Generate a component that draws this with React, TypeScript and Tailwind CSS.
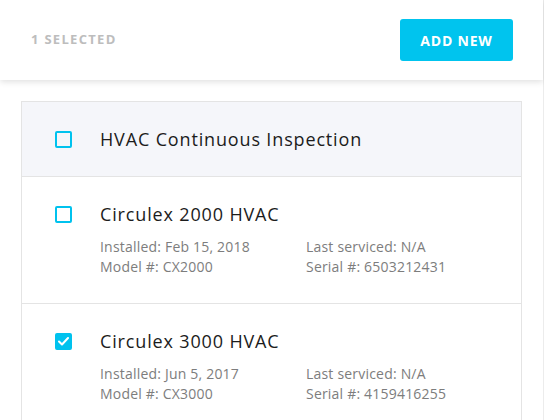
import React, { useState } from 'react';

type Item = {
  id: number;
  name: string;
  installed: string;
  serviced: string;
  model: string;
  serial: string;
};

const items: Item[] = [
  { id: 1, name: 'Circulex 2000 HVAC', installed: 'Feb 15, 2018', serviced: 'N/A', model: 'CX2000', serial: '6503212431' },
  { id: 2, name: 'Circulex 3000 HVAC', installed: 'Jun 5, 2017', serviced: 'N/A', model: 'CX3000', serial: '4159416255' },
];

function Checkbox({ checked, onChange }: { checked: boolean; onChange: () => void }) {
  return (
    <button
      type="button"
      onClick={onChange}
      className={`flex h-[17px] w-[17px] shrink-0 items-center justify-center rounded-[2px] border-2 border-[#00c2ee] ${checked ? 'bg-[#00c2ee]' : 'bg-transparent'}`}
    >
      {checked && (
        <svg width="11" height="9" viewBox="0 0 11 9" fill="none">
          <path d="M1 4.5L4 7.5L10 1" stroke="white" strokeWidth="2" strokeLinecap="round" strokeLinejoin="round" />
        </svg>
      )}
    </button>
  );
}

export default function App() {
  const [selected, setSelected] = useState<number[]>([2]);

  const toggle = (id: number) =>
    setSelected((s) => (s.includes(id) ? s.filter((x) => x !== id) : [...s, id]));

  return (
    <div className="min-h-[420px] w-[544px] border-r border-[#ececec] bg-white" style={{ fontFamily: '"Open Sans", sans-serif' }}>
      <header className="flex h-20 w-[543px] items-center justify-between pl-[31px] pr-[30px] shadow-[0_2px_6px_rgba(0,0,0,0.12)]">
        <span className="text-[13px] font-bold tracking-[1.3px] text-[#bdbdbd]">{selected.length} SELECTED</span>
        <button className="h-[42px] w-[113px] rounded-[3px] bg-[#00c4ee] text-[14px] font-bold tracking-[0.8px] text-white">ADD NEW</button>
      </header>

      <div className="ml-[21px] mt-[21px] w-[501px] border border-[#e4e4e4]">
        <div className="flex h-[74px] items-center gap-[28px] bg-[#f5f6fa] px-[33px]">
          <Checkbox checked={false} onChange={() => {}} />
          <span className="text-[18px] tracking-[0.85px] text-[#1c1c1c]">HVAC Continuous Inspection</span>
        </div>

        {items.map((item) => (
          <div key={item.id} className="flex items-start gap-[28px] border-t border-[#e4e4e4] px-[33px] pb-[26px] pt-[25px]">
            <div className="mt-[4px]">
              <Checkbox checked={selected.includes(item.id)} onChange={() => toggle(item.id)} />
            </div>
            <div>
              <div className="text-[18px] leading-[24px] tracking-[0.85px] text-[#1c1c1c]">{item.name}</div>
              <div className="mt-[11px] grid grid-cols-[206px_auto] text-[14px] leading-[20px] tracking-[0.2px] text-[#7d7d7d]">
                <span>Installed: {item.installed}</span>
                <span>Last serviced: {item.serviced}</span>
                <span>Model #: {item.model}</span>
                <span>Serial #: {item.serial}</span>
              </div>
            </div>
          </div>
        ))}
      </div>
    </div>
  );
}
